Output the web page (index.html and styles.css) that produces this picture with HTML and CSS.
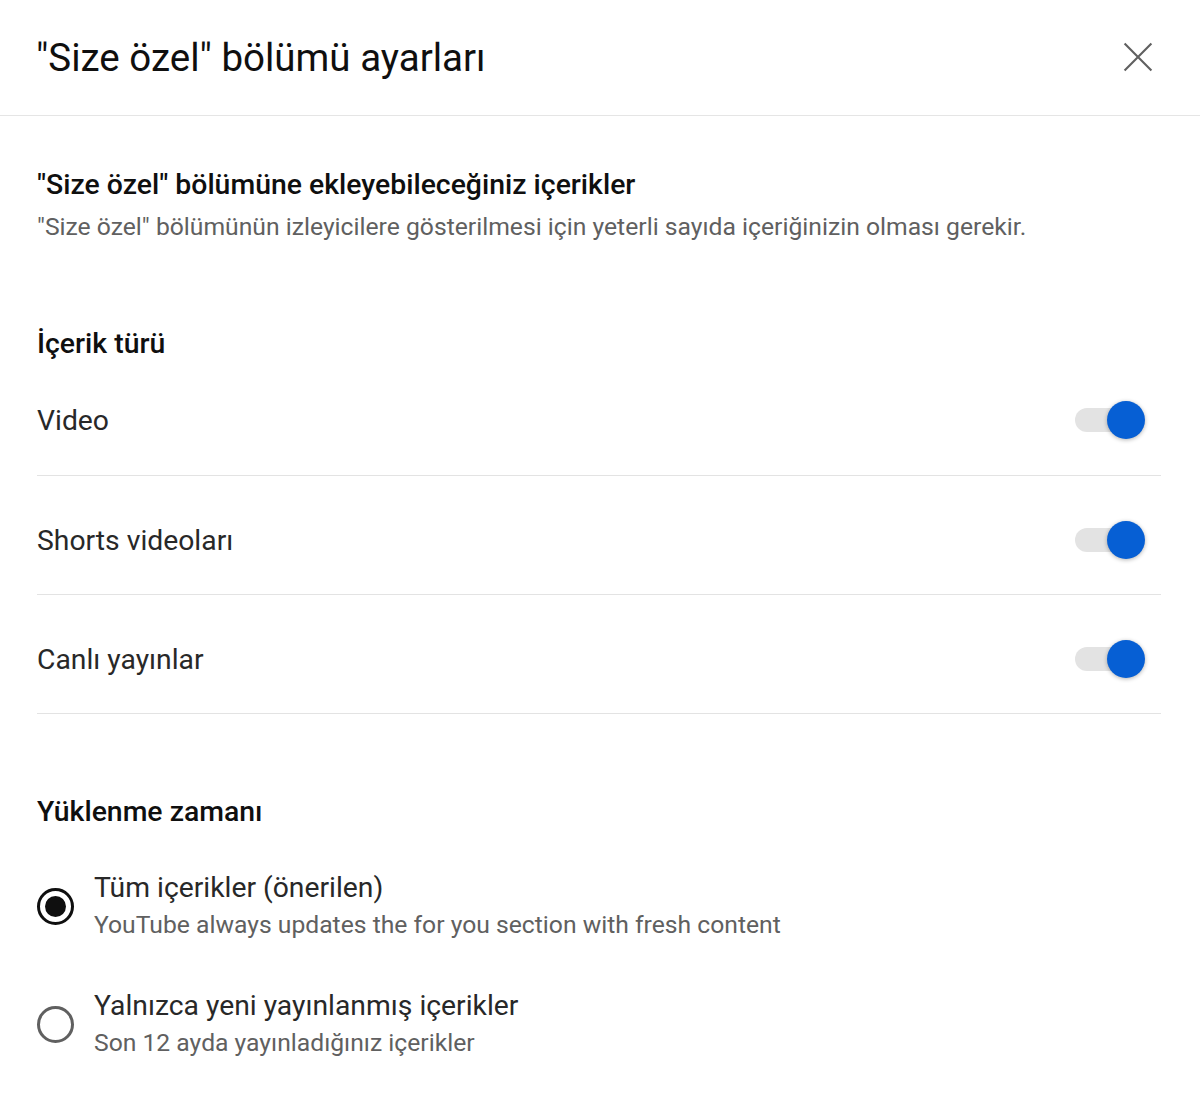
FILE: index.html
```html
<!DOCTYPE html>
<html lang="tr">
<head>
<meta charset="utf-8">
<title>Size özel bölümü ayarları</title>
<link rel="stylesheet" href="styles.css">
</head>
<body>
<div class="dialog">
  <header class="dialog-header">
    <h1 class="dialog-title">"Size özel" bölümü ayarları</h1>
    <button class="close-btn" aria-label="Kapat">
      <svg viewBox="0 0 24 24" width="46" height="46"><path d="M19 5 5 19M5 5l14 14" stroke="#606060" stroke-width="1.1" fill="none"/></svg>
    </button>
  </header>
  <main class="dialog-body">
    <section class="intro">
      <h2 class="section-title">"Size özel" bölümüne ekleyebileceğiniz içerikler</h2>
      <p class="section-desc">"Size özel" bölümünün izleyicilere gösterilmesi için yeterli sayıda içeriğinizin olması gerekir.</p>
    </section>

    <section class="content-type">
      <h3 class="group-title">İçerik türü</h3>
      <div class="toggle-row first">
        <span class="row-label">Video</span>
        <span class="toggle on"><span class="track"></span><span class="knob"></span></span>
      </div>
      <div class="toggle-row">
        <span class="row-label">Shorts videoları</span>
        <span class="toggle on"><span class="track"></span><span class="knob"></span></span>
      </div>
      <div class="toggle-row">
        <span class="row-label">Canlı yayınlar</span>
        <span class="toggle on"><span class="track"></span><span class="knob"></span></span>
      </div>
    </section>

    <section class="upload-time">
      <h3 class="group-title">Yüklenme zamanı</h3>
      <div class="radio-row">
        <span class="radio checked"></span>
        <div class="radio-text">
          <div class="radio-label">Tüm içerikler (önerilen)</div>
          <div class="radio-sub">YouTube always updates the for you section with fresh content</div>
        </div>
      </div>
      <div class="radio-row">
        <span class="radio"></span>
        <div class="radio-text">
          <div class="radio-label">Yalnızca yeni yayınlanmış içerikler</div>
          <div class="radio-sub">Son 12 ayda yayınladığınız içerikler</div>
        </div>
      </div>
    </section>
  </main>
</div>
</body>
</html>
```

FILE: styles.css
```css
* { box-sizing: border-box; }
html, body { margin: 0; padding: 0; background: #fff; }
body {
  font-family: Roboto, "Noto Sans", Arial, sans-serif;
  color: #0f0f0f;
  width: 1200px;
  height: 1111px;
  overflow: hidden;
}
.dialog { width: 1200px; }
.dialog-header {
  height: 116px;
  border-bottom: 1.5px solid #e5e5e5;
  display: flex;
  align-items: center;
  justify-content: space-between;
  padding: 0 39px 0 36px;
}
.dialog-title {
  margin: 0;
  font-size: 38.5px;
  font-weight: 400;
  color: #0f0f0f;
  line-height: 46px;
}
.close-btn {
  border: 0;
  background: none;
  padding: 0;
  width: 46px;
  height: 46px;
  display: flex;
  margin-top: -1px;
}
.dialog-body { padding: 0 39px 0 37px; }
.intro { padding-top: 52px; }
.section-title {
  margin: 0;
  font-size: 28.4px;
  font-weight: 500;
  line-height: 34px;
}
.section-desc {
  margin: 10px 0 0;
  font-size: 24.7px;
  line-height: 30px;
  color: #606060;
}
.content-type { padding-top: 85px; }
.group-title {
  margin: 0;
  font-size: 28.4px;
  font-weight: 500;
  line-height: 34px;
}
.toggle-row {
  display: flex;
  align-items: center;
  justify-content: space-between;
  height: 119px;
  padding-top: 10px;
  border-bottom: 1px solid #e3e3e3;
}
.toggle-row.first { height: 115px; padding-top: 4px; }
.row-label { font-size: 28.3px; color: #282828; }
.toggle {
  position: relative;
  width: 70px;
  height: 38px;
  margin-right: 16px;
  display: block;
}
.toggle .track {
  position: absolute;
  left: 0; top: 7px;
  width: 62px; height: 24px;
  border-radius: 12px;
  background: #e3e3e3;
}
.toggle .knob {
  position: absolute;
  right: 0; top: 0;
  width: 38px; height: 38px;
  border-radius: 50%;
  background: #065fd4;
  box-shadow: 0 1px 4px rgba(0,0,0,0.3);
}
.upload-time { padding-top: 81px; }
.radio-row {
  display: flex;
  align-items: center;
  gap: 20px;
  margin-top: 40px;
}
.radio-row + .radio-row { margin-top: 44px; }
.radio {
  flex: none;
  width: 37px; height: 37px;
  border-radius: 50%;
  border: 3px solid #606060;
  display: flex;
  align-items: center;
  justify-content: center;
}
.radio.checked { border-color: #0f0f0f; }
.radio.checked::after {
  content: "";
  width: 21px; height: 21px;
  border-radius: 50%;
  background: #0f0f0f;
}
.radio-text { display: flex; flex-direction: column; }
.radio-label { font-size: 28.3px; line-height: 38px; color: #282828; }
.radio-sub { font-size: 24.7px; line-height: 36px; color: #606060; }
```
